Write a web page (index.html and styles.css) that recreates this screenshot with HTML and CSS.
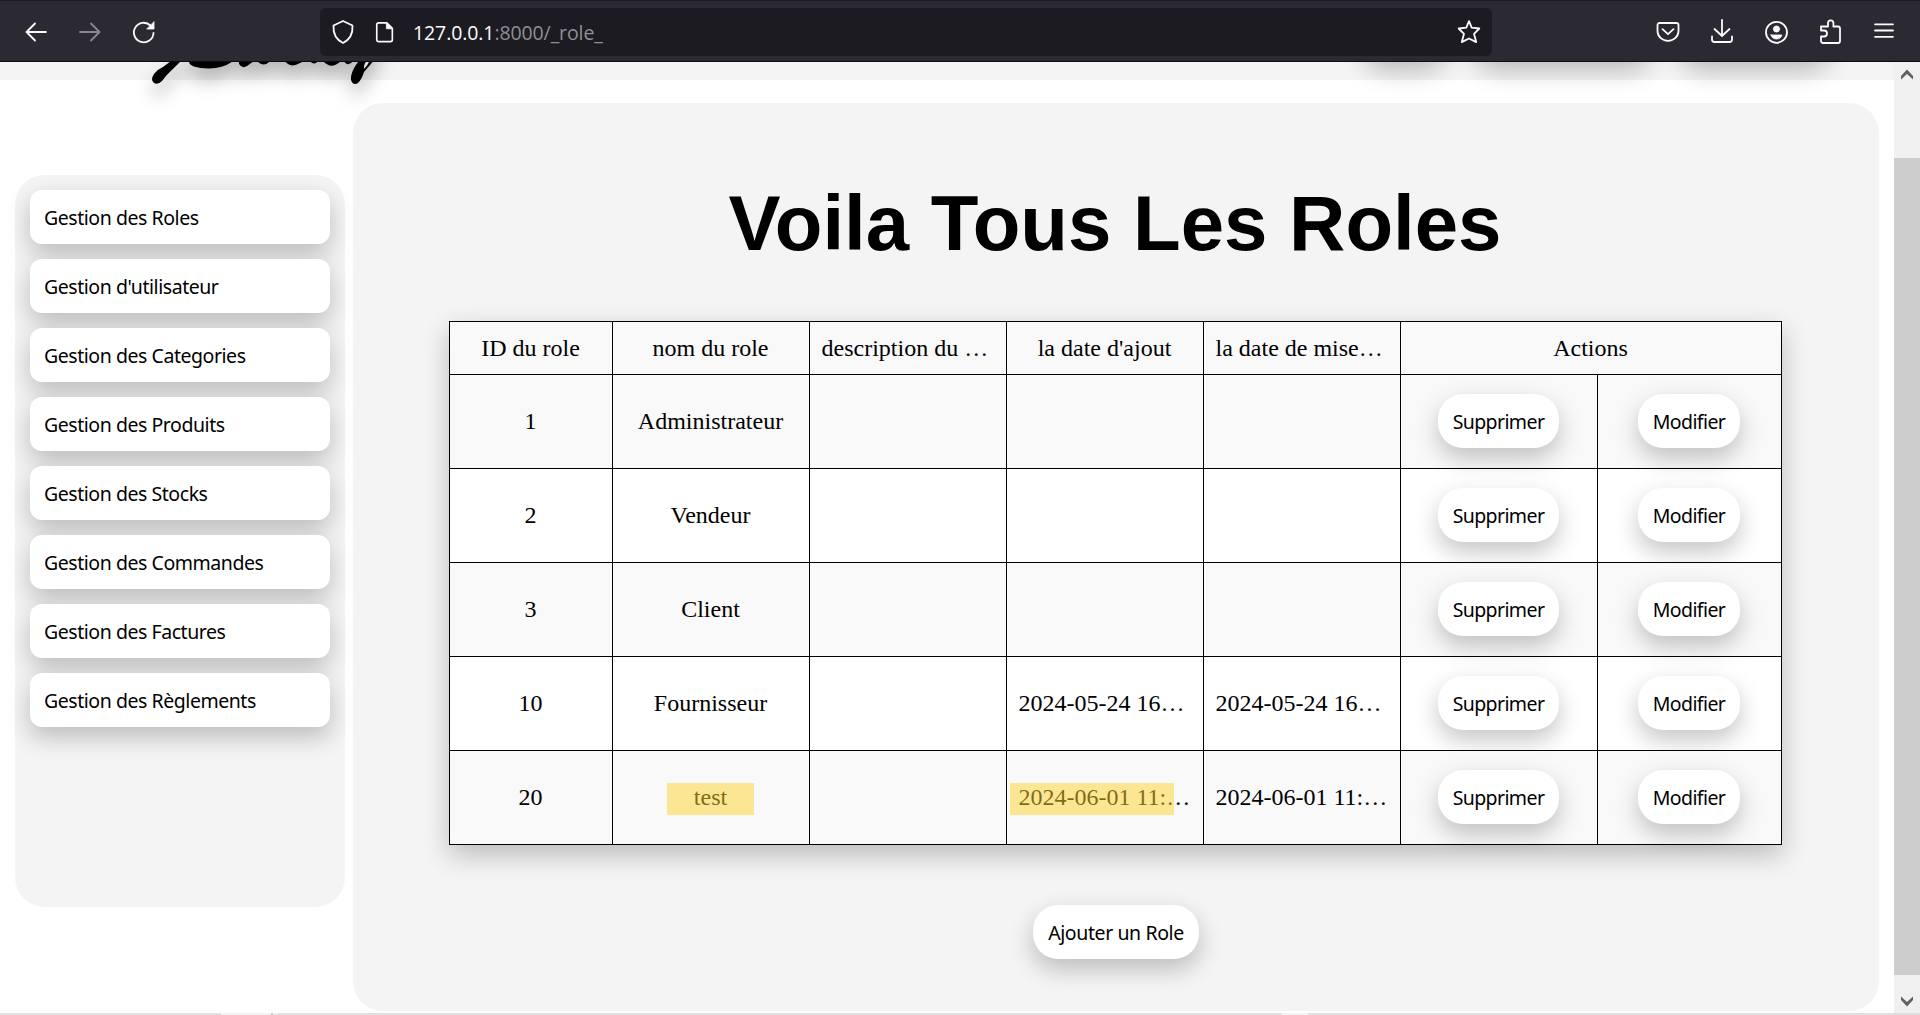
FILE: index.html
```html
<!DOCTYPE html>
<html lang="fr">
<head>
<meta charset="utf-8">
<title>Roles</title>
<link rel="stylesheet" href="styles.css">
</head>
<body>
<div class="toolbar">
  <svg class="icon back" viewBox="0 0 24 24"><path d="M22 12H3M11 3.500L2.500 12l8.500 8.500"/></svg>
  <svg class="icon forward" viewBox="0 0 24 24"><path d="M2 12h19M13 3.500l8.500 8.500-8.500 8.500"/></svg>
  <svg class="icon reload" viewBox="0 0 24 24"><path d="M21.500 13A9.800 9.800 0 1 1 18.500 5.500"/><path class="solid" d="M22 2v7h-7z"/></svg>
  <div class="urlbar">
    <svg class="icon shield" viewBox="0 0 24 26"><path d="M12 2l9.500 4.500c.5 8-2.500 14-9.500 17.500C5 20.500 2 14.500 2.500 6.500z"/></svg>
    <svg class="icon page-icon" viewBox="0 0 24 26"><path d="M5 3h9l6 6v12.500a2 2 0 0 1-2 2H5a2 2 0 0 1-2-2V5a2 2 0 0 1 2-2z"/><path class="solid" d="M13.500 3v6.500H20z"/></svg>
    <div class="url"><span class="host">127.0.0.1</span>:8000/_role_</div>
    <svg class="icon star" viewBox="0 0 24 26"><path d="M12 2.200l2.700 6.500 7.600.8-5.300 5.300 2.200 8.300-7.200-3.600-7.200 3.600L7 14.800 1.700 9.500l7.600-.8z"/></svg>
  </div>
  <div class="actions">
    <svg class="icon" viewBox="0 0 24 24"><path d="M3.500 3h17a2 2 0 0 1 2 2v6c0 5.500-4.500 9.800-10.500 9.800S1.500 16.500 1.500 11V5a2 2 0 0 1 2-2zM6.500 9.200l5.500 5 5.500-5"/></svg>
    <svg class="icon" viewBox="0 0 24 24"><path d="M12 0v15.500M4.500 9l7.500 7 7.500-7M2 16.500v3a2.500 2.500 0 0 0 2.500 2.500h15a2.500 2.500 0 0 0 2.500-2.500v-3"/></svg>
    <svg class="icon" viewBox="0 0 24 24"><circle cx="12.500" cy="12.300" r="10.500"/><circle class="solid" cx="12.500" cy="9" r="3.100"/><path class="solid" d="M7 15h11c-1 3-3 4-5.500 4S8 18 7 15z"/></svg>
    <svg class="icon" viewBox="0 0 24 24"><path d="M3 9V6.500h7V3a2.700 2.700 0 0 1 5.400 0v3.500H20a2 2 0 0 1 2 2V21a2 2 0 0 1-2 2H5a2 2 0 0 1-2-2v-4.500h3a3 3 0 0 0 0-6H3z"/></svg>
    <svg class="icon" viewBox="0 0 24 24"><path d="M3 4.300h18M3 10.500h18M3 16.800h18"/></svg>
  </div>
</div>
<div class="window">
  <div class="page">
    <div class="header">
      <svg class="logo" viewBox="140 0 245 90">
        <path d="M185 50L180 62C173 69 167 74 162 81q-4 4-8 2-4-3 0-9 4-5 9-7l8-6 4-14z"/>
        <path d="M195 40L189 62q1 6 20 6.500 14-.5 22-6L250 35z"/>
        <path d="M238 35l1 29q3 5 8 2l7-5 4 1q6 5 11 0l6-2 9 0q6 9 16 3l6-3 4 1q4 5 8 0l4-1q8 9 15 4l6-4q5 8 10 1l12-24z"/>
        <path d="M362 35L358 62q-8 11-7 18 2 6 7 3 4-4 6-11l12-14 6-20z"/>
        <path d="M364 66q1-4 4-6l2 0q-2 5-6 9z" fill="#ddd"/>
      </svg>
      <div class="nav"><span class="nav-short"></span><span class="nav-long"></span><span class="nav-mid"></span></div>
    </div>
    <div class="body">
      <div class="sidebar">
        <a>Gestion des Roles</a>
        <a>Gestion d'utilisateur</a>
        <a>Gestion des Categories</a>
        <a>Gestion des Produits</a>
        <a>Gestion des Stocks</a>
        <a>Gestion des Commandes</a>
        <a>Gestion des Factures</a>
        <a>Gestion des Règlements</a>
      </div>
      <div class="main">
        <h1>Voila Tous Les Roles</h1>
        <table>
          <colgroup><col class="c-id"><col class="c"><col class="c"><col class="c"><col class="c"><col class="c"><col></colgroup>
          <tr class="odd head"><td>ID du role</td><td>nom du role</td><td class="long">description du …</td><td>la date d'ajout</td><td class="long">la date de mise…</td><td colspan="2">Actions</td></tr>
          <tr class="odd"><td>1</td><td>Administrateur</td><td></td><td></td><td></td><td><button>Supprimer</button></td><td><button>Modifier</button></td></tr>
          <tr><td>2</td><td>Vendeur</td><td></td><td></td><td></td><td><button>Supprimer</button></td><td><button>Modifier</button></td></tr>
          <tr class="odd"><td>3</td><td>Client</td><td></td><td></td><td></td><td><button>Supprimer</button></td><td><button>Modifier</button></td></tr>
          <tr><td>10</td><td>Fournisseur</td><td></td><td class="long">2024-05-24 16…</td><td class="long">2024-05-24 16…</td><td><button>Supprimer</button></td><td><button>Modifier</button></td></tr>
          <tr class="odd"><td>20</td><td class="marked">test<i class="mark mark-name"></i></td><td></td><td class="long marked">2024-06-01 11:…<i class="mark mark-date"></i></td><td class="long">2024-06-01 11:…</td><td><button>Supprimer</button></td><td><button>Modifier</button></td></tr>
        </table>
        <button class="add">Ajouter un Role</button>
      </div>
    </div>
  </div>
  <div class="scrollbar">
    <svg viewBox="0 0 14 12"><path d="M1 10.500V7l6-6.500L13 7v3.500L7 5z"/></svg>
    <div class="thumb"></div>
    <svg viewBox="0 0 14 12"><path d="M1 1.500V5l6 6.500L13 5V1.500L7 7z"/></svg>
  </div>
</div>
<div class="edge"></div>
</body>
</html>
```
FILE: styles.css
```css
* { box-sizing: border-box; }
body {
  margin: 0;
  width: 1920px;
  height: 1015px;
  overflow: hidden;
  display: flex;
  flex-direction: column;
  background: #fff;
}

/* browser toolbar */
.toolbar {
  position: relative;
  z-index: 2;
  flex: none;
  height: 62px;
  padding-top: 1px;
  display: flex;
  align-items: center;
  background: #2b2a33;
  border-top: 1px solid #1c1b22;
  border-bottom: 1px solid #0c0c0d;
}
.icon {
  flex: none;
  width: 24px;
  height: 24px;
  fill: none;
  stroke: #fbfbfe;
  stroke-width: 1.8;
  stroke-linecap: round;
  stroke-linejoin: round;
  overflow: visible;
}
.icon .solid { fill: #fbfbfe; stroke-width: .8; }
.back { margin-left: 24px; }
.forward { margin-left: 30px; opacity: .45; }
.reload { margin-left: 30px; }
.urlbar {
  width: 1172px;
  height: 48px;
  margin-left: 164px;
  padding-left: 11px;
  display: flex;
  align-items: center;
  background: #1c1b22;
  border-radius: 6px;
}
.shield, .page-icon, .star { height: 26px; }
.page-icon { margin-left: 19px; width: 22px; }
.url {
  margin-left: 17px;
  padding-top: 2px;
  font: 19.5px/26px "Open Sans", sans-serif;
  letter-spacing: -.1px;
  color: #8f8f95;
}
.host { color: #fbfbfe; }
.star { margin: 0 11px 0 auto; }
.actions { display: flex; gap: 30px; margin-left: 164px; }

/* scrolled page */
.window { flex: 1; min-height: 0; display: flex; }
.page { width: 1894px; overflow: hidden; }
.header {
  height: 100px;
  margin-top: -82px;
  padding-left: 140px;
  display: flex;
  justify-content: space-between;
  background: #f4f4f4;
}
.logo {
  width: 245px;
  height: 90px;
  margin-top: 20px;
  overflow: visible;
  filter: drop-shadow(0 12px 9px rgba(0, 0, 0, .25));
}
.nav { display: flex; gap: 25px; padding: 27px 62px 0 0; }
.nav span { height: 54px; border-radius: 25px; background: #fff; box-shadow: 0 10px 25px rgba(0, 0, 0, .23); }
.nav-short { width: 86px; }
.nav-long { width: 180px; }
.nav-mid { width: 154px; }

.body { display: flex; gap: 8px; padding: 23px 15px 0; }
.sidebar {
  width: 330px;
  height: 732px;
  margin-top: 72px;
  padding: 15px;
  display: flex;
  flex-direction: column;
  gap: 15px;
  background: #f4f4f4;
  border-radius: 30px;
}
.sidebar a, button {
  height: 54px;
  padding: 0 15px;
  border: 0;
  background: #fff;
  color: #000;
  font: 19.5px/55px "Noto Sans", sans-serif;
  letter-spacing: -.45px;
  white-space: nowrap;
  box-shadow: 0 10px 25px rgba(0, 0, 0, .23);
}
.sidebar a { border-radius: 12px; padding-left: 14px; }
.main {
  width: 1526px;
  height: 908px;
  display: flex;
  flex-direction: column;
  align-items: center;
  background: #f4f4f4;
  border-radius: 30px;
}
h1 {
  margin: 74px 0 0;
  padding-right: 2px;
  font: bold 78px/92px "Liberation Sans", Arial, sans-serif;
}
table {
  width: 1333px;
  margin: 52px 2px 0 0;
  table-layout: fixed;
  border-collapse: collapse;
  background: #fff;
  font: 24px/30px "Liberation Serif", "Times New Roman", serif;
  text-align: center;
  box-shadow: 0 10px 25px rgba(0, 0, 0, .23);
}
.c-id { width: 163px; }
.c { width: 197px; }
tr { height: 94px; }
.head { height: 53px; }
.odd { background: #f9f9f9; }
td {
  padding: 0 12px 2px;
  border: 1px solid #000;
  white-space: nowrap;
}
.head td { padding-bottom: 0; }
.long { text-align: left; }
button { display: block; margin: 0 auto; border-radius: 25px; }
td button { letter-spacing: -.6px; }
.add { margin: 60px auto 0; letter-spacing: -.4px; }
.marked { position: relative; }
.mark { position: absolute; top: 32px; height: 32px; background: rgba(253, 211, 47, .5); }
.mark-name { left: 54px; width: 87px; }
.mark-date { left: 3px; width: 164px; }

.scrollbar {
  width: 26px;
  display: flex;
  flex-direction: column;
  align-items: center;
  padding: 7px 0 6px;
  background: #f0f0f0;
}
.scrollbar svg { width: 14px; height: 12px; fill: #606060; }
.thumb { width: 26px; height: 817px; margin: 77px 0 auto; background: #cdcdcd; }
.edge { height: 2px; flex: none; background: linear-gradient(90deg, #e0e0e0 221px, #f3f3f3 221px 271px, #ccc 271px 273px, #eee 273px 278px, #e0e0e0 278px 1282px, #f3f3f3 1282px 1308px, #e0e0e0 1308px); }
```
